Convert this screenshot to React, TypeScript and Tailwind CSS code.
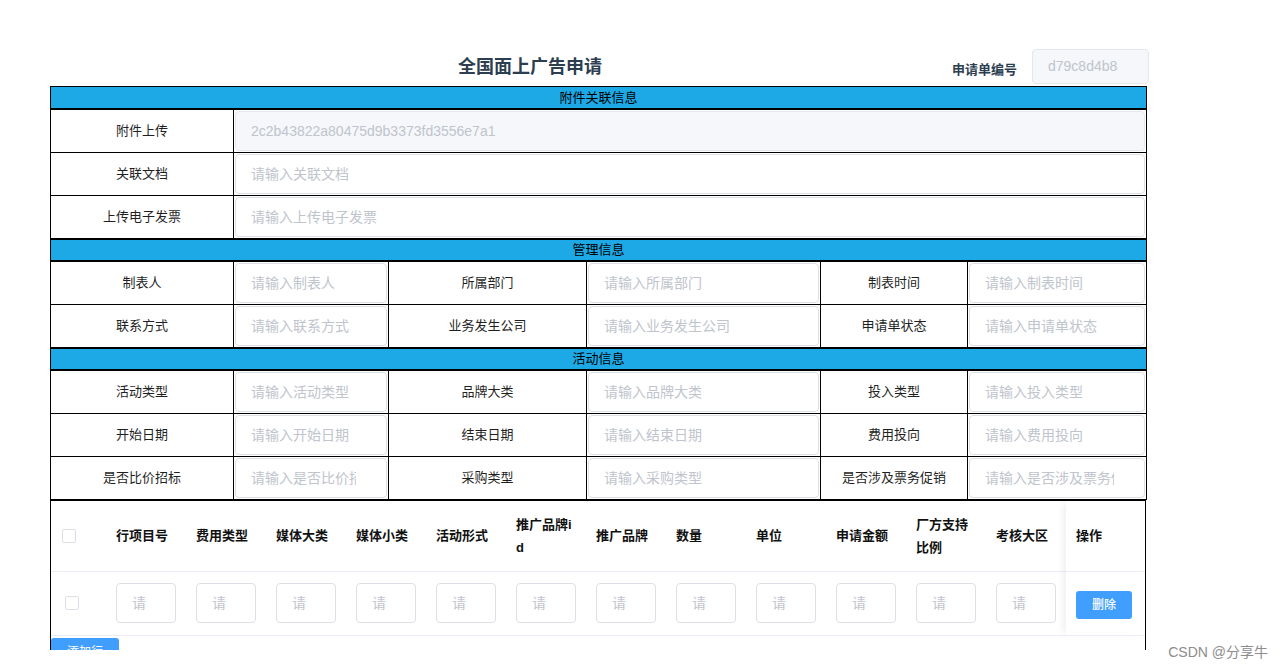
import React from "react";

const inputCls =
  "block h-[40px] w-full rounded-[4px] border border-[#dcdfe6] bg-white pl-[15px] pr-[30px] text-[14px] text-[#606266] outline-none placeholder:text-[#c0c4cc]";

const labelCls = "border border-black p-0 text-center text-[13px] font-normal text-[#1f1f1f]";

function Bar({ title, first }: { title: string; first?: boolean }) {
  return (
    <tr>
      <td
        colSpan={6}
        className={`h-[22px] border-x border-b-2 border-black bg-[#1ca9e6] p-0 text-center text-[13px] leading-[19px] text-black ${
          first ? "border-t" : "border-t-2"
        }`}
      >
        {title}
      </td>
    </tr>
  );
}

function Field({ ph, span, disabled, value }: { ph?: string; span?: number; disabled?: boolean; value?: string }) {
  return (
    <td colSpan={span} className="h-[42px] border border-black p-px">
      {disabled ? (
        <input
          className="block h-[40px] w-full rounded-[4px] border border-[#e4e7ed] bg-[#f5f7fa] pl-[15px] pr-[30px] text-[14px] text-[#c0c4cc] outline-none"
          value={value}
          disabled
          readOnly
        />
      ) : (
        <input className={inputCls} placeholder={ph} />
      )}
    </td>
  );
}

const manageRows = [
  ["制表人", "所属部门", "制表时间"],
  ["联系方式", "业务发生公司", "申请单状态"],
];

const activityRows = [
  ["活动类型", "品牌大类", "投入类型"],
  ["开始日期", "结束日期", "费用投向"],
  ["是否比价招标", "采购类型", "是否涉及票务促销"],
];

const lineCols = [
  "行项目号",
  "费用类型",
  "媒体大类",
  "媒体小类",
  "活动形式",
  "推广品牌id",
  "推广品牌",
  "数量",
  "单位",
  "申请金额",
  "厂方支持比例",
  "考核大区",
];

function Checkbox() {
  return <span className="block h-[14px] w-[14px] rounded-[2px] border border-[#dcdfe6] bg-white" />;
}

function TripleRow({ labels }: { labels: string[] }) {
  return (
    <tr>
      {labels.map((l) => (
        <React.Fragment key={l}>
          <td className={labelCls}>{l}</td>
          <Field ph={"请输入" + l} />
        </React.Fragment>
      ))}
    </tr>
  );
}

export default function App() {
  return (
    <div className="relative h-[669px] w-[1283px] overflow-hidden bg-white font-['Liberation_Sans','Noto_Sans_CJK_SC',sans-serif]">
      <div className="ml-[50px] w-[1096px] pt-[48px]">
        {/* title row */}
        <div className="flex h-[38px] items-center">
          <div className="w-[902px] shrink-0 pl-[58px] text-center text-[18px] font-bold text-[#2c3e50]">全国面上广告申请</div>
          <div className="mt-[6px] w-[80px] shrink-0 text-[13px] font-bold text-[#2c3e50]">申请单编号</div>
          <input
            className="-mt-[2px] h-[35px] w-[117px] shrink-0 rounded-[4px] border border-[#e4e7ed] bg-[#f5f7fa] pl-[15px] pr-[30px] text-[14px] text-[#c0c4cc] outline-none"
            value="d79c8d4b8a1c03f2"
            disabled
            readOnly
          />
        </div>

        <table className="w-full table-fixed border-collapse">
          <colgroup>
            <col className="w-[183px]" />
            <col className="w-[155px]" />
            <col className="w-[198px]" />
            <col className="w-[234px]" />
            <col className="w-[147px]" />
            <col className="w-[179px]" />
          </colgroup>
          <tbody>
            <Bar title="附件关联信息" first />
            <tr>
              <td className={labelCls}>附件上传</td>
              <Field span={5} disabled value="2c2b43822a80475d9b3373fd3556e7a1" />
            </tr>
            <tr>
              <td className={labelCls}>关联文档</td>
              <Field span={5} ph="请输入关联文档" />
            </tr>
            <tr>
              <td className={labelCls}>上传电子发票</td>
              <Field span={5} ph="请输入上传电子发票" />
            </tr>
            <Bar title="管理信息" />
            {manageRows.map((r) => (
              <TripleRow key={r[0]} labels={r} />
            ))}
            <Bar title="活动信息" />
            {activityRows.map((r) => (
              <TripleRow key={r[0]} labels={r} />
            ))}
          </tbody>
        </table>

        {/* line items */}
        <div className="h-[150px] overflow-hidden border-x border-t border-black">
          <div className="flex">
            <div className="flex-1">
              <div className="flex h-[71px] border-b border-[#ebeef5]">
                <div className="flex w-[55px] shrink-0 items-center pl-[11px]">
                  <Checkbox />
                </div>
                {lineCols.map((c) => (
                  <div
                    key={c}
                    className="flex w-[80px] shrink-0 items-center break-all px-[10px] text-[13px] font-bold leading-[23px] text-[#111]"
                  >
                    {c}
                  </div>
                ))}
              </div>
              <div className="flex h-[64px] border-b border-[#ebeef5]">
                <div className="flex w-[55px] shrink-0 items-center pl-[14px]">
                  <Checkbox />
                </div>
                {lineCols.map((c) => (
                  <div key={c} className="flex w-[80px] shrink-0 items-center px-[10px]">
                    <input
                      className="block h-[40px] w-[60px] rounded-[4px] border border-[#dcdfe6] bg-white pl-[15px] text-[14px] outline-none placeholder:text-[#c0c4cc]"
                      placeholder="请"
                    />
                  </div>
                ))}
              </div>
            </div>
            <div className="w-[79px] shrink-0 bg-white shadow-[-5px_0_8px_-3px_rgba(0,0,0,0.08)]">
              <div className="flex h-[71px] items-center border-b border-[#ebeef5] px-[10px] text-[13px] font-bold text-[#111]">
                操作
              </div>
              <div className="flex h-[64px] items-center border-b border-[#ebeef5] px-[10px]">
                <button className="mt-[3px] h-[28px] w-[56px] rounded-[3px] bg-[#409eff] text-[12px] font-medium text-white">
                  删除
                </button>
              </div>
            </div>
          </div>
          <button className="mt-[2px] h-[28px] w-[68px] rounded-[3px] bg-[#409eff] text-[12px] text-white">添加行</button>
        </div>
      </div>

      <div className="absolute bottom-[8px] right-[15px] text-[14px] leading-[18px] text-[#8c8c8c]">CSDN @分享牛</div>
    </div>
  );
}
